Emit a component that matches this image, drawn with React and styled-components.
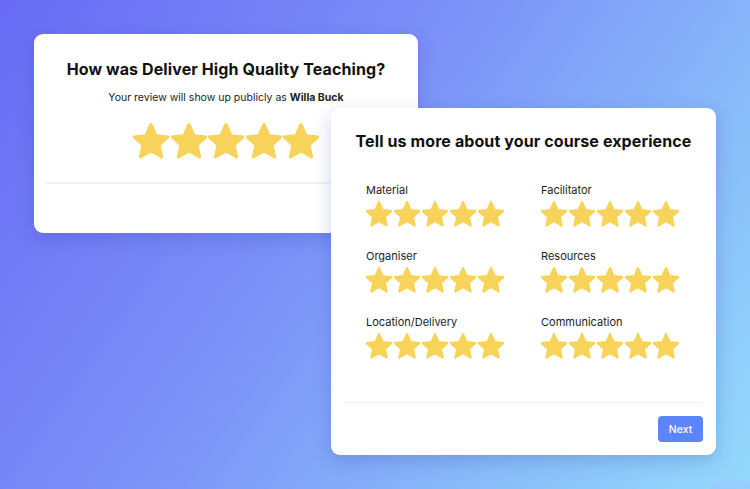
import React from "react";
import styled, { createGlobalStyle } from "styled-components";

const GlobalStyle = createGlobalStyle`
  html, body {
    margin: 0;
    padding: 0;
  }
  body {
    font-family: Inter, "Noto Sans", "Liberation Sans", sans-serif;
    -webkit-font-smoothing: antialiased;
  }
`;

const Stage = styled.div`
  position: relative;
  width: 750px;
  height: 489px;
  overflow: hidden;
  box-sizing: border-box;
  padding: 34px;
  background: linear-gradient(125deg, #696bf5 0%, #7b90f8 42%, #8bc2fa 80%, #94d9fc 100%);
  display: grid;
  grid-template-columns: 297px 87px 298px;
  grid-template-rows: 74px 125px 222px;
`;

const Glow = styled.div`
  position: absolute;
  right: -20px;
  bottom: -30px;
  width: 60px;
  height: 38px;
  border-radius: 12px;
  background: rgba(150, 200, 255, 0.6);
`;

const Card = styled.section`
  background: #fff;
  border-radius: 9px;
  box-shadow: 0 6px 18px rgba(40, 60, 150, 0.22);
  display: flex;
  flex-direction: column;
  box-sizing: border-box;
`;

const IntroCard = styled(Card)`
  grid-column: 1 / 3;
  grid-row: 1 / 3;
  align-items: center;
  padding: 26px 12px 0;
`;

const DetailCard = styled(Card)`
  grid-column: 2 / 4;
  grid-row: 2 / 4;
  z-index: 1;
  padding: 24px 13px 13px;
`;

const Title = styled.h2`
  margin: 0;
  font-size: 16px;
  line-height: 19px;
  font-weight: 700;
  color: #111;
  text-align: center;
  letter-spacing: 0.1px;
`;

const Subtitle = styled.p`
  margin: 12px 0 0;
  font-size: 10.5px;
  line-height: 13px;
  color: #222;
  text-align: center;

  b {
    font-weight: 700;
  }
`;

const Divider = styled.hr`
  align-self: stretch;
  border: none;
  height: 2px;
  background: #f2f2f4;
  margin: ${(p) => p.$top || 0}px 0 0;
`;

const StarRow = styled.div`
  display: flex;
  gap: ${(p) => p.$gap}px;
  margin-top: ${(p) => p.$top || 0}px;

  svg {
    display: block;
  }
`;

const Ratings = styled.div`
  display: grid;
  grid-template-columns: 175px 150px;
  row-gap: 22px;
  padding: 0 22px;
  margin-top: 32px;
`;

const Field = styled.div`
  display: flex;
  flex-direction: column;
`;

const Label = styled.span`
  font-size: 11px;
  color: #1c1c1c;
  line-height: 14px;
`;

const Footer = styled.div`
  display: flex;
  justify-content: flex-end;
  margin-top: 13px;
`;

const NextButton = styled.button`
  width: 45px;
  height: 26px;
  border: none;
  border-radius: 4px;
  background: #5b86fb;
  color: #fff;
  font-family: inherit;
  font-size: 10.5px;
  font-weight: 500;
  cursor: pointer;
`;

function Star({ size }) {
  return (
    <svg width={size} height={size} viewBox="2.2 1.8 19.6 19.6">
      <path
        d="M12 2.6l2.75 6.08 6.6.66-4.95 4.45 1.42 6.55L12 16.98 6.18 20.34l1.42-6.55-4.95-4.45 6.6-.66z"
        fill="#f8d35a"
        stroke="#f8d35a"
        strokeWidth="1.6"
        strokeLinejoin="round"
      />
    </svg>
  );
}

function Stars({ size, gap, top }) {
  return (
    <StarRow $gap={gap} $top={top}>
      {[0, 1, 2, 3, 4].map((i) => (
        <Star key={i} size={size} />
      ))}
    </StarRow>
  );
}

const categories = [
  "Material",
  "Facilitator",
  "Organiser",
  "Resources",
  "Location/Delivery",
  "Communication",
];

export default function App() {
  return (
    <>
      <GlobalStyle />
      <Stage>
        <IntroCard>
          <Title>How was Deliver High Quality Teaching?</Title>
          <Subtitle>
            Your review will show up publicly as <b>Willa Buck</b>
          </Subtitle>
          <Stars size={36} gap={1.5} top={19} />
          <Divider $top={23} />
        </IntroCard>

        <DetailCard>
          <Title>Tell us more about your course experience</Title>
          <Ratings>
            {categories.map((name) => (
              <Field key={name}>
                <Label>{name}</Label>
                <Stars size={26} gap={2} top={4} />
              </Field>
            ))}
          </Ratings>
          <Divider $top={43} />
          <Footer>
            <NextButton>Next</NextButton>
          </Footer>
        </DetailCard>
        <Glow />
      </Stage>
    </>
  );
}
